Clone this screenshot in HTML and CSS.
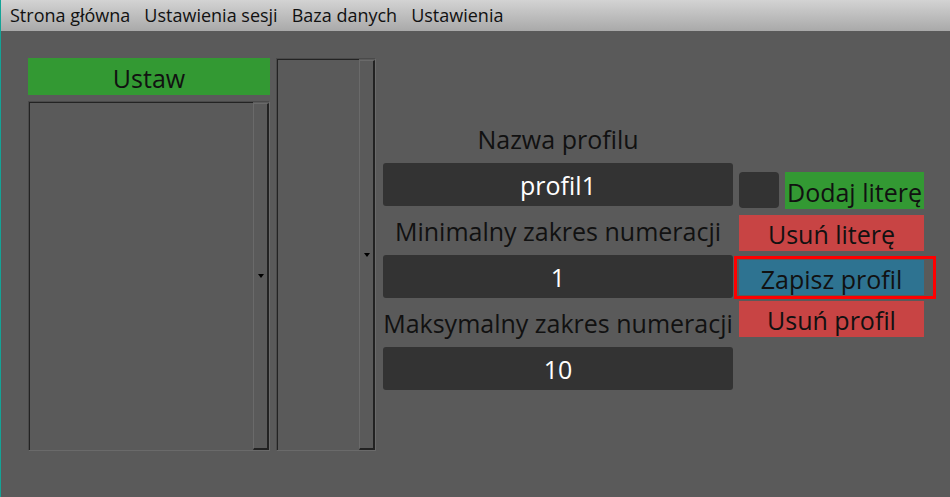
FILE: index.html
```html
<!DOCTYPE html>
<html lang="pl">
<head>
<meta charset="utf-8">
<link rel="stylesheet" href="styles.css">
</head>
<body>
<div class="window">
  <div class="menubar">
    <span class="menu-item">Strona główna</span>
    <span class="menu-item">Ustawienia sesji</span>
    <span class="menu-item">Baza danych</span>
    <span class="menu-item">Ustawienia</span>
  </div>
  <div class="main">
    <div class="left-col">
      <div class="btn btn-green btn-set">Ustaw</div>
      <div class="listbox list1">
        <div class="list-body"></div>
        <div class="scrollbar"><span class="arrow"></span></div>
      </div>
    </div>
    <div class="listbox list2">
      <div class="list-body"></div>
      <div class="scrollbar"><span class="arrow"></span></div>
    </div>
    <div class="form">
      <div class="label">Nazwa profilu</div>
      <div class="input">profil1</div>
      <div class="label">Minimalny zakres numeracji</div>
      <div class="input">1</div>
      <div class="label">Maksymalny zakres numeracji</div>
      <div class="input">10</div>
    </div>
    <div class="actions">
      <div class="row-add">
        <div class="checkbox"></div>
        <div class="btn btn-green btn-add">Dodaj literę</div>
      </div>
      <div class="btn btn-red btn-del-letter">Usuń literę</div>
      <div class="focus-ring">
        <div class="btn btn-blue">Zapisz profil</div>
      </div>
      <div class="btn btn-red btn-del-profile">Usuń profil</div>
    </div>
  </div>
</div>
</body>
</html>
```

FILE: styles.css
```css
* { box-sizing: border-box; }
html, body {
  margin: 0;
  padding: 0;
  width: 950px;
  height: 497px;
  overflow: hidden;
  background: #5a5a5a;
  font-family: "Open Sans", "Noto Sans", sans-serif;
}
.window {
  width: 950px;
  height: 497px;
  border-left: 1px solid #14a396;
  background: #5a5a5a;
}
.menubar {
  height: 31px;
  background: linear-gradient(#d3d3d3, #a9a9a9);
  display: flex;
  align-items: center;
  padding-left: 9px;
  gap: 14px;
  font-size: 18px;
  color: #111;
}
.menu-item { line-height: 31px; }
.main {
  display: flex;
  align-items: flex-start;
  padding: 27px 0 0 27px;
}
.left-col {
  width: 242px;
  display: flex;
  flex-direction: column;
  gap: 6px;
}
.btn {
  display: flex;
  align-items: center;
  justify-content: center;
  padding-top: 3px;
  color: #111;
  font-size: 25px;
  line-height: 1;
  white-space: nowrap;
}
.btn-green { background: #339933; }
.btn-red { background: #c84444; }
.btn-blue { background: #2e7391; }
.btn-set { height: 37px; }
.listbox {
  display: flex;
  border-top: 1px solid #4a4a4a;
  border-left: 1px solid #4a4a4a;
  border-right: 1px solid #6a6a6a;
  border-bottom: 1px solid #6a6a6a;
}
.list-body {
  flex: 1;
  border-top: 1px solid #232323;
  border-left: 1px solid #232323;
}
.list1 { height: 350px; }
.list2 {
  margin-left: 6px;
  width: 100px;
  height: 393px;
}
.scrollbar {
  width: 16px;
  display: flex;
  align-items: center;
  justify-content: center;
  border-top: 1px solid #6a6a6a;
  border-left: 1px solid #6a6a6a;
  border-right: 2px solid #222;
  border-bottom: 2px solid #222;
  margin-top: 1px;
}
.arrow {
  width: 0;
  height: 0;
  border-left: 3px solid transparent;
  border-right: 3px solid transparent;
  border-top: 4px solid #000;
}
.form {
  margin-left: 7px;
  margin-top: 56px;
  width: 350px;
  display: flex;
  flex-direction: column;
}
.label {
  height: 49px;
  display: flex;
  align-items: center;
  justify-content: center;
  padding-top: 2px;
  font-size: 25px;
  line-height: 1;
  color: #111;
  white-space: nowrap;
}
.input {
  height: 43px;
  background: #333333;
  border-radius: 3px;
  color: #fff;
  font-size: 25px;
  line-height: 1;
  padding-top: 2px;
  display: flex;
  align-items: center;
  justify-content: center;
}
.actions {
  margin-left: 1px;
  margin-top: 114px;
  width: 202px;
  padding-left: 5px;
  display: flex;
  flex-direction: column;
}
.actions .btn { width: 185px; height: 36px; }
.row-add {
  display: flex;
  gap: 6px;
  height: 37px;
}
.checkbox {
  width: 40px;
  height: 36px;
  background: #333;
  border-radius: 4px;
}
.actions .btn-add { width: 139px; height: 37px; }
.btn-del-letter { margin-top: 6px; }
.focus-ring {
  margin-left: -5px;
  margin-top: 5px;
  width: 202px;
  height: 43px;
  border: 3px solid #ff0000;
  padding: 1px 0 0 2px;
}
.actions .btn-blue { height: 35px; }
.btn-del-profile { margin-top: 2px; }
```
